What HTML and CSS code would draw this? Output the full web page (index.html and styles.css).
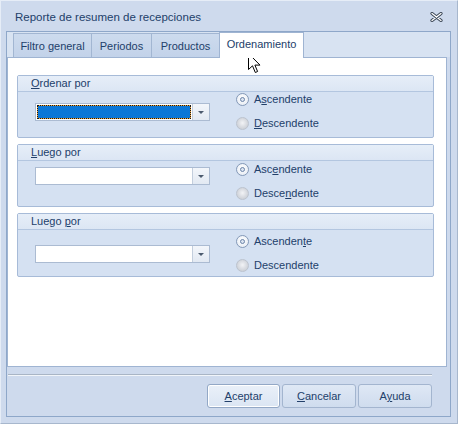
FILE: index.html
```html
<!DOCTYPE html>
<html>
<head>
<meta charset="utf-8">
<link rel="stylesheet" href="styles.css">
</head>
<body>
<div class="window">
  <div class="titlebar">
    <span class="title">Reporte de resumen de recepciones</span>
    <svg class="close" width="13" height="10" viewBox="0 0 13 10">
      <path d="M2 1.5 L11 8.5 M11 1.5 L2 8.5" stroke="#3a4656" stroke-width="3.2" stroke-linecap="round"/>
      <path d="M2 1.5 L11 8.5 M11 1.5 L2 8.5" stroke="#ffffff" stroke-width="1.3" stroke-linecap="round"/>
    </svg>
  </div>
  <div class="frame">
    <div class="tabstrip">
      <div class="tab t1">Filtro general</div>
      <div class="tab t2">Periodos</div>
      <div class="tab t3">Productos</div>
      <div class="tab active">Ordenamiento</div>
    </div>
    <div class="page">
      <div class="group g1">
        <div class="ghead"><u>O</u>rdenar por</div>
        <div class="gbody">
          <div class="combo">
            <div class="cfield"><div class="sel"></div></div>
            <div class="cbtn"><span class="tri"></span></div>
          </div>
          <div class="radios">
            <div class="rrow"><span class="radio on"><span class="dot"></span></span><span>A<u>s</u>cendente</span></div>
            <div class="rrow"><span class="radio off"></span><span><u>D</u>escendente</span></div>
          </div>
        </div>
      </div>
      <div class="group g2">
        <div class="ghead"><u>L</u>uego por</div>
        <div class="gbody">
          <div class="combo">
            <div class="cfield"></div>
            <div class="cbtn"><span class="tri"></span></div>
          </div>
          <div class="radios">
            <div class="rrow"><span class="radio on"><span class="dot"></span></span><span>Asc<u>e</u>ndente</span></div>
            <div class="rrow"><span class="radio off"></span><span>Desce<u>n</u>dente</span></div>
          </div>
        </div>
      </div>
      <div class="group g3">
        <div class="ghead">Luego <u>p</u>or</div>
        <div class="gbody">
          <div class="combo">
            <div class="cfield"></div>
            <div class="cbtn"><span class="tri"></span></div>
          </div>
          <div class="radios">
            <div class="rrow"><span class="radio on"><span class="dot"></span></span><span>Ascenden<u>t</u>e</span></div>
            <div class="rrow"><span class="radio off"></span><span>Descendente</span></div>
          </div>
        </div>
      </div>
    </div>
    <div class="footer">
      <div class="sep"></div>
      <div class="buttons">
        <div class="btn default"><u>A</u>ceptar</div>
        <div class="btn"><u>C</u>ancelar</div>
        <div class="btn">A<u>y</u>uda</div>
      </div>
    </div>
  </div>
  <svg class="cursor" width="13" height="21" viewBox="0 0 13 21">
    <path d="M0.5 0.5 L0.5 16.5 L4.5 12.8 L7.3 19.5 L9.6 18.5 L6.9 12.1 L12 12.1 Z" fill="#ffffff" stroke="#000000" stroke-width="1" stroke-linejoin="miter"/>
  </svg>
</div>
</body>
</html>
```

FILE: styles.css
```css
html, body {
  margin: 0;
  padding: 0;
}
body {
  width: 458px;
  height: 424px;
  overflow: hidden;
  font-family: "Liberation Sans", Arial, sans-serif;
  font-size: 11px;
  color: #22406a;
}
.window {
  position: relative;
  box-sizing: border-box;
  width: 458px;
  height: 424px;
  background: #cedaed;
  border: 1px solid #a7b7cd;
  border-left-color: #e6edf7;
  border-top-color: #e6edf7;
  padding: 0 6px 6px 5px;
  display: flex;
  flex-direction: column;
}
.titlebar {
  height: 30px;
  display: flex;
  align-items: center;
  justify-content: space-between;
  padding: 0 8px 0 9px;
}
.title {
  font-size: 11.5px;
  color: #22406a;
  padding-top: 1px;
}
.close {
  display: block;
  margin-top: 1px;
}
.frame {
  flex: 1;
  display: flex;
  flex-direction: column;
  border: 1px solid #8ea7c9;
  background: #cedaed;
}
.tabstrip {
  height: 25px;
  display: flex;
  align-items: flex-end;
  padding-left: 6px;
  background: #d8e3f2;
}
.tab {
  box-sizing: border-box;
  height: 24px;
  display: flex;
  align-items: center;
  justify-content: center;
  border: 1px solid #a2b6d2;
  border-bottom: none;
  background: linear-gradient(#cddbee, #c2d2e9);
  font-size: 11px;
  color: #22406a;
  margin-right: -1px;
}
.t1 { width: 79px; }
.t2 { width: 61px; }
.t3 { width: 69px; }
.tab.active {
  width: 85px;
  height: 26px;
  margin-bottom: -1px;
  background: #ffffff;
  border-color: #9fb4d2;
  position: relative;
  z-index: 1;
  align-items: flex-start;
  padding-top: 5px;
}
.page {
  box-sizing: border-box;
  height: 310px;
  margin: 0 3px 0 0;
  background: #ffffff;
  border: 1px solid #9fb4d2;
  padding: 17px 12px 0 9px;
  display: flex;
  flex-direction: column;
  gap: 6px;
}
.group {
  box-sizing: border-box;
  height: 63px;
  border: 1px solid #a7bbd8;
  border-radius: 2px;
  background: #d5e1f2;
}
.g3 { height: 64px; }
.ghead {
  box-sizing: border-box;
  height: 16px;
  padding-left: 13px;
  border-bottom: 1px solid #b3c6e0;
  background: linear-gradient(#e6eef8, #dce6f4);
  font-size: 11px;
  line-height: 15px;
  color: #22406a;
}
.gbody {
  display: flex;
  align-items: flex-start;
  padding-left: 17px;
}
.combo {
  box-sizing: border-box;
  width: 175px;
  height: 18px;
  display: flex;
  border: 1px solid #abbbd2;
  background: #ffffff;
}
.g1 .combo { margin-top: 11px; }
.g2 .combo { margin-top: 6px; }
.g3 .combo { margin-top: 15px; }
.cfield {
  flex: 1;
  padding: 1px;
}
.sel {
  box-sizing: border-box;
  height: 14px;
  border: 1px dotted #1a1a1a;
  background: linear-gradient(#0b77d7, #0b77d7) padding-box, linear-gradient(#f0a43a, #f0a43a) border-box;
}
.cbtn {
  width: 16px;
  border-left: 1px solid #c3cedd;
  background: linear-gradient(#f3f6fb, #e2e9f3);
  display: flex;
  align-items: center;
  justify-content: center;
}
.tri {
  width: 0;
  height: 0;
  border-left: 3px solid transparent;
  border-right: 3px solid transparent;
  border-top: 3px solid #4b5a6e;
}
.radios {
  margin-left: 26px;
  display: flex;
  flex-direction: column;
  gap: 10px;
}
.g1 .radios { margin-top: 0px; }
.g2 .radios { margin-top: 1px; }
.g3 .radios { margin-top: 4px; }
.rrow {
  height: 14px;
  display: flex;
  align-items: center;
  gap: 5px;
  font-size: 11px;
  color: #22406a;
}
.radio {
  box-sizing: border-box;
  width: 13px;
  height: 13px;
  border-radius: 50%;
  display: flex;
  align-items: center;
  justify-content: center;
}
.radio.on {
  border: 1px solid #8499b8;
  background: radial-gradient(circle at 50% 40%, #ffffff, #e3e9f2);
}
.radio.on .dot {
  box-sizing: border-box;
  width: 5px;
  height: 5px;
  border-radius: 50%;
  border: 1px solid #6c84a8;
  background: #dbe4f1;
}
.radio.off {
  border: 1px solid #bcc3ce;
  background: radial-gradient(circle at 50% 45%, #f2f3f6 0%, #d6d9df 55%, #c3c7cf 100%);
}
.footer {
  flex: 1;
  display: flex;
  flex-direction: column;
  padding: 7px 18px 0 1px;
}
.sep {
  height: 1px;
  background: #a9b5c5;
  border-bottom: 1px solid #f1f5fa;
}
.buttons {
  margin-top: 8px;
  display: flex;
  justify-content: flex-end;
  gap: 2px;
}
.btn {
  box-sizing: border-box;
  width: 74px;
  height: 24px;
  border: 1px solid #a3b5cf;
  border-radius: 3px;
  background: linear-gradient(#dfe8f5, #cfdcee);
  display: flex;
  align-items: center;
  justify-content: center;
  font-size: 11px;
  color: #22406a;
}
.btn.default {
  width: 73px;
  background: linear-gradient(#eaf0f9, #dbe5f3);
  box-shadow: inset 0 0 0 1px #ffffff;
  border-color: #93a8c6;
}
.cursor {
  position: absolute;
  left: 247px;
  top: 52px;
}
```
